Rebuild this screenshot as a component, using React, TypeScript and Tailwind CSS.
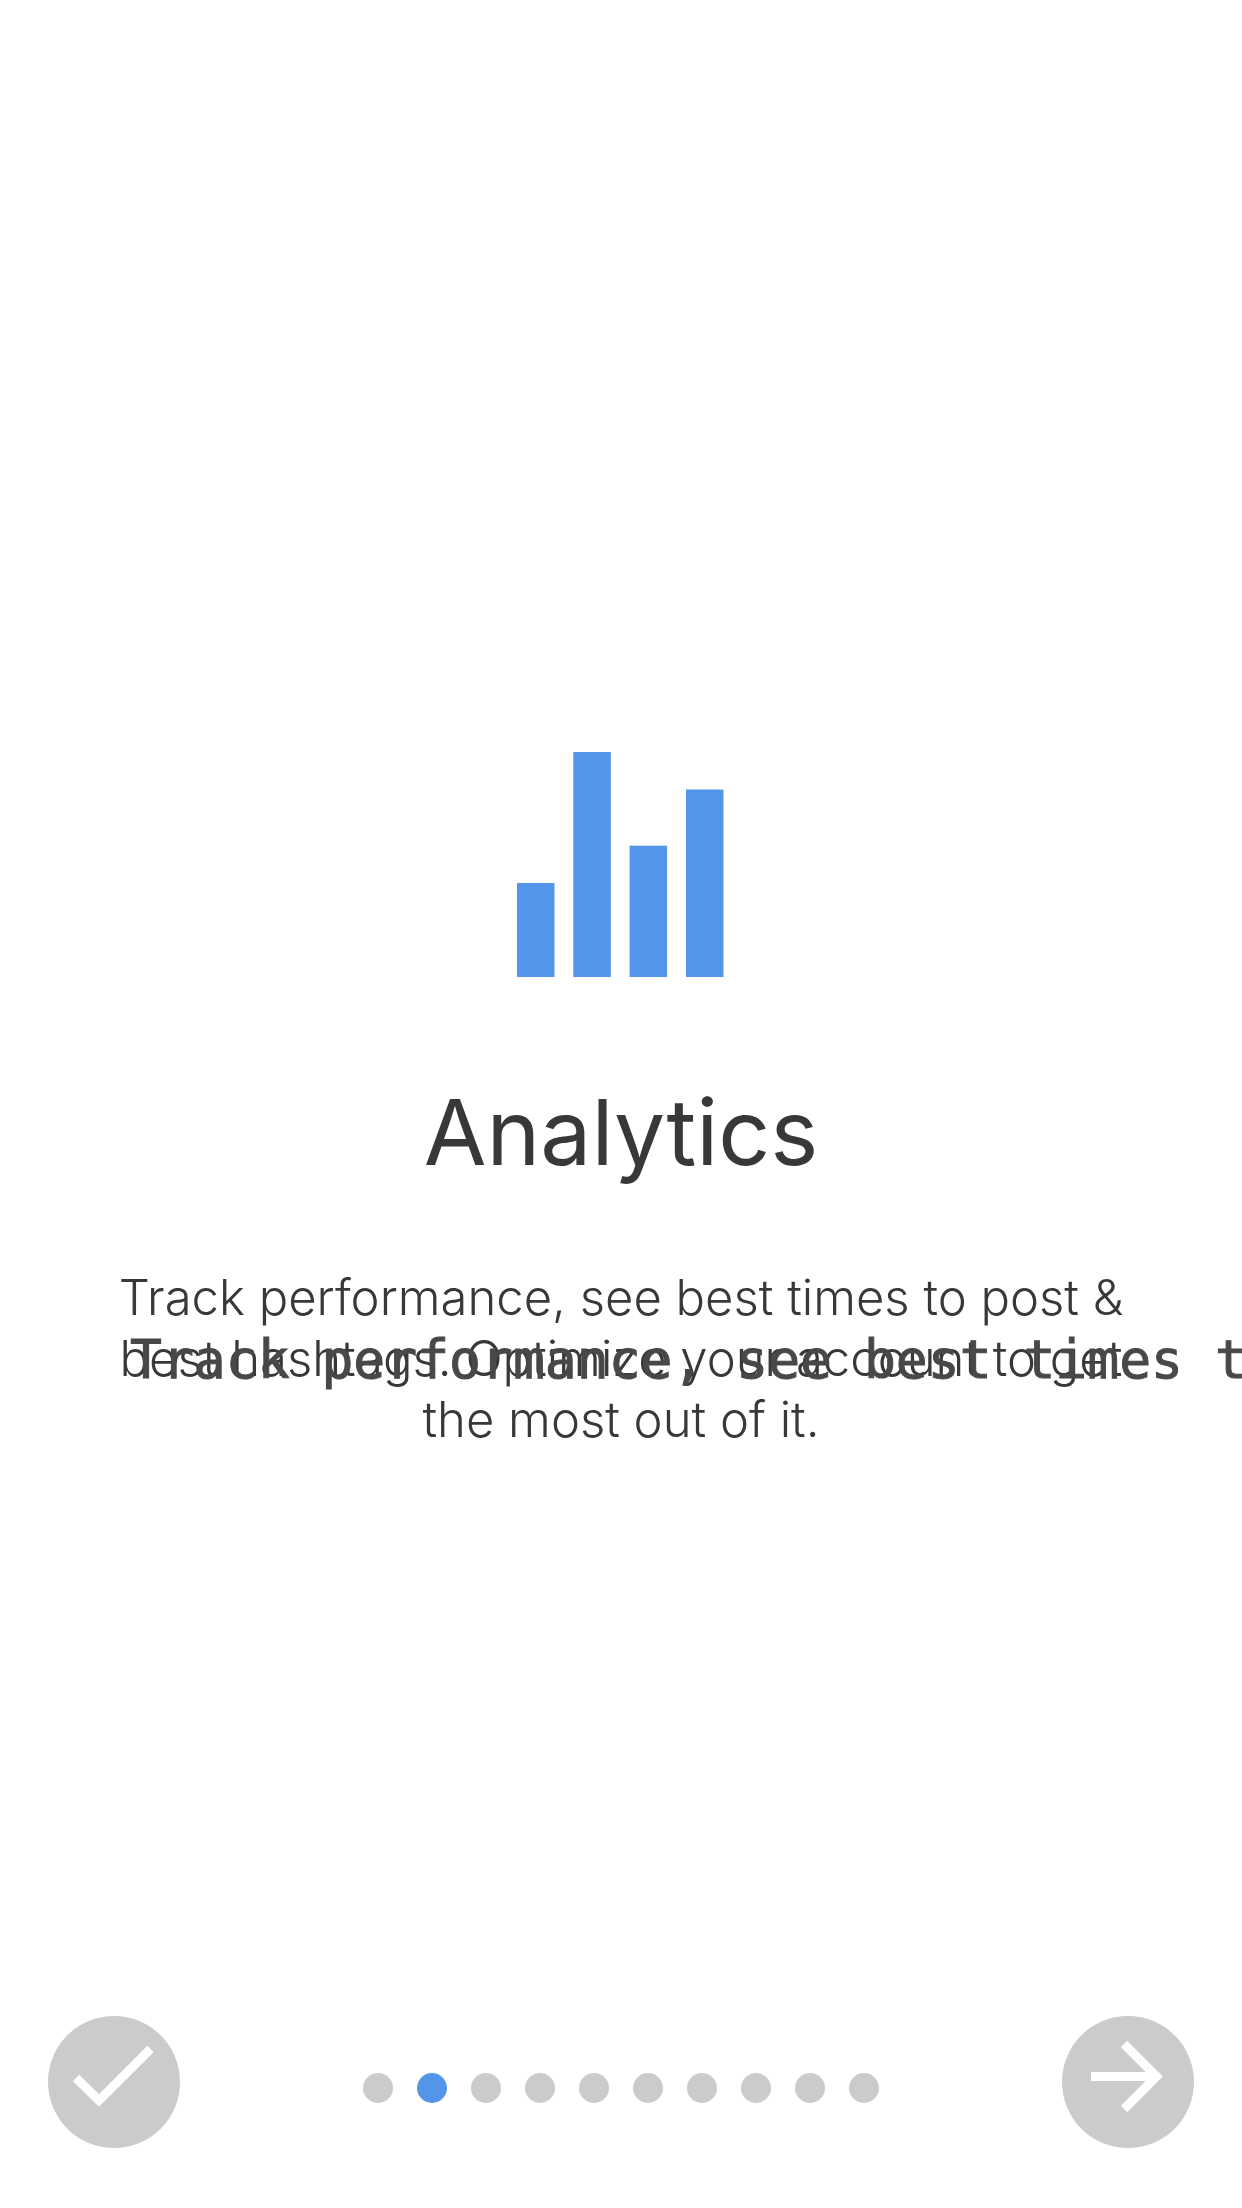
const caption =
  'Track performance, see best times to post & best hashtags. Optimize your account to get the most out of it.';
const pages = Array.from({ length: 10 }, (_, i) => i);
const current = 1;

function BarsIcon() {
  return (
    <svg viewBox="0 0 208 225" className="h-[225px] w-[208px] fill-[#5395e8]" aria-hidden="true">
      <rect x="0" y="131" width="37.500" height="94" />
      <rect x="56.300" y="0" width="37.500" height="225" />
      <rect x="112.600" y="93.700" width="37.500" height="131.300" />
      <rect x="169" y="37.500" width="37.500" height="187.500" />
    </svg>
  );
}

export default function App() {
  return (
    <div className="flex min-h-screen flex-col overflow-hidden bg-white font-[Inter,sans-serif] text-[#383838]">
      <main className="flex flex-1 flex-col items-center pt-[752px]">
        <BarsIcon />
        <h1 className="mt-[95px] text-[91px] leading-[120px]">Analytics</h1>
        <div className="relative mt-[75px] w-full px-24">
          <p className="text-center text-[49px] leading-[61px] font-light">
            Track performance, see best times to post &amp;
            <br />
            best hashtags. Optimize your account to get
            <br />
            the most out of it.
          </p>
          <p className="absolute top-[61px] left-[130px] font-['DejaVu_Sans_Mono',monospace] text-[53px] leading-[64px] whitespace-nowrap text-[#48484b] [-webkit-text-stroke:1px_#48484b]">
            {caption}
          </p>
        </div>
      </main>
      <footer className="flex items-center justify-between px-12 pb-[60px]">
        <button aria-label="Done" className="size-[132px] rounded-full bg-[#cbcbcb]">
          <svg viewBox="0 0 132 132" className="size-full fill-none stroke-white stroke-[9]" aria-hidden="true">
            <path d="M28 62 L51 84.500 L102.500 33" />
          </svg>
        </button>
        <nav aria-label="Pages" className="mt-3 flex gap-6">
          {pages.map((page) => (
            <button
              key={page}
              aria-label={`Page ${page + 1}`}
              aria-current={page === current ? 'page' : undefined}
              className={page === current ? 'size-[30px] rounded-full bg-[#5395e8]' : 'size-[30px] rounded-full bg-[#cbcbcb]'}
            />
          ))}
        </nav>
        <button aria-label="Next" className="size-[132px] rounded-full bg-[#cbcbcb]">
          <svg viewBox="0 0 132 132" className="size-full fill-none stroke-white stroke-[9]" aria-hidden="true">
            <path d="M29 60.500 H94 M62 28 L94.500 60.500 L62 93" />
          </svg>
        </button>
      </footer>
    </div>
  );
}
